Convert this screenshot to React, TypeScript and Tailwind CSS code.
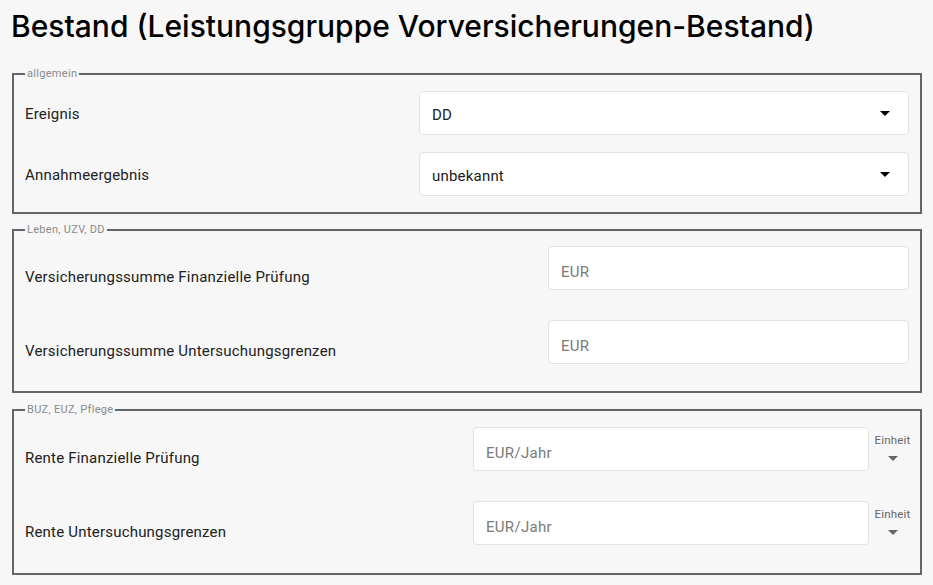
import React from "react";

const body = { fontFamily: "Roboto, 'Liberation Sans', sans-serif" };

const Legend = ({ children }: { children: React.ReactNode }) => (
    <legend className="px-[2px] text-[11px] leading-[12px] tracking-[0.3px] text-[#8a8a8a]">{children}</legend>
);

const Caret = ({ className }: { className?: string }) => (
    <svg width="10" height="5" viewBox="0 0 10 5" className={className}>
        <path d="M0 0 L10 0 L5 5 Z" fill="currentColor" />
    </svg>
);

const SelectRow = ({ label, value }: { label: string; value: string }) => (
    <div className="flex items-center">
        <div className="w-[394px] pt-[2px] text-[15px] leading-[20px] tracking-[0.2px] text-[#212121]">{label}</div>
        <div className="flex h-[44px] flex-1 items-center justify-between rounded-[4px] border border-[#e2e2e2] bg-white pl-[12px] pr-[18px]">
            <span className="pt-[5px] text-[15px] tracking-[0.2px] text-[#212121]">{value}</span>
            <Caret className="text-black" />
        </div>
    </div>
);

const InputRow = ({ label, placeholder, labelWidth, unit }: { label: string; placeholder: string; labelWidth: string; unit?: boolean }) => (
    <div className="flex items-start">
        <div className={`${labelWidth} mt-[21px] text-[15px] leading-[20px] tracking-[0.2px] text-[#212121]`}>{label}</div>
        <div className="flex h-[44px] flex-1 items-center rounded-[4px] border border-[#e2e2e2] bg-white pl-[12px]">
            <span className="pt-[8px] text-[15px] tracking-[0.3px] text-[#7a7a7a]">{placeholder}</span>
        </div>
        {unit && (
            <div className="flex w-[47px] flex-col items-center pt-[5px]">
                <span className="text-[11.5px] leading-[16px] tracking-[0.2px] text-[#666]">Einheit</span>
                <Caret className="mt-[8px] text-[#666]" />
            </div>
        )}
    </div>
);

export default function App() {
    return (
        <div className="min-h-screen bg-[#f7f7f7] pb-[12px]" style={body}>
            <h1
                className="pl-[11px] pt-[8px] text-[30px] font-medium leading-[36px] text-black"
                style={{ fontFamily: "Inter, 'Noto Sans', sans-serif" }}
            >
                Bestand (Leistungsgruppe Vorversicherungen-Bestand)
            </h1>

            <fieldset className="ml-[12px] mt-[24px] w-[910px] border-2 border-[#626569] px-[11px] pb-[16px] pt-[11px]">
                <Legend>allgemein</Legend>
                <div className="flex flex-col gap-[17px]">
                    <SelectRow label="Ereignis" value="DD" />
                    <SelectRow label="Annahmeergebnis" value="unbekannt" />
                </div>
            </fieldset>

            <fieldset className="ml-[12px] mt-[10px] w-[910px] border-2 border-[#626569] px-[11px] pb-[27px] pt-[10px]">
                <Legend>Leben, UZV, DD</Legend>
                <div className="flex flex-col gap-[30px]">
                    <InputRow label="Versicherungssumme Finanzielle Prüfung" placeholder="EUR" labelWidth="w-[523px]" />
                    <InputRow label="Versicherungssumme Untersuchungsgrenzen" placeholder="EUR" labelWidth="w-[523px]" />
                </div>
            </fieldset>

            <fieldset className="ml-[12px] mt-[11px] w-[910px] border-2 border-[#626569] pl-[11px] pr-[4px] pb-[28px] pt-[11px]">
                <Legend>BUZ, EUZ, Pflege</Legend>
                <div className="flex flex-col gap-[30px]">
                    <InputRow label="Rente Finanzielle Prüfung" placeholder="EUR/Jahr" labelWidth="w-[448px]" unit />
                    <InputRow label="Rente Untersuchungsgrenzen" placeholder="EUR/Jahr" labelWidth="w-[448px]" unit />
                </div>
            </fieldset>
        </div>
    );
}
